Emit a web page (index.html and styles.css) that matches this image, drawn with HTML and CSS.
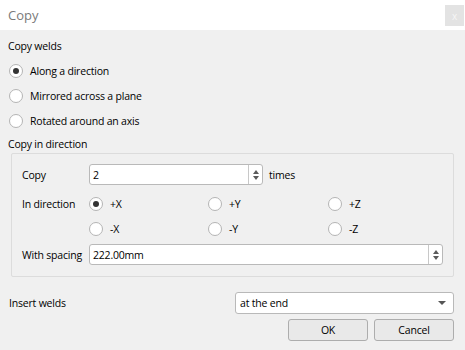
FILE: index.html
```html
<!DOCTYPE html>
<html lang="en">
<head>
    <meta charset="UTF-8">
    <title>Copy</title>
    <link rel="stylesheet" href="styles.css">
</head>
<body>
    <div class="dialog">
        <!-- Title bar -->
        <div class="titlebar">
            <span class="title">Copy</span>
            <span class="close">x</span>
        </div>

        <div class="content">
            <div class="section-label">Copy welds</div>
            <label class="radio-row"><span class="radio checked"></span>Along a direction</label>
            <label class="radio-row"><span class="radio"></span>Mirrored across a plane</label>
            <label class="radio-row"><span class="radio"></span>Rotated around an axis</label>

            <div class="section-label group-title">Copy in direction</div>
            <div class="group">
                <div class="field-row first">
                    <span class="field-label">Copy</span>
                    <div class="spinbox short">
                        <span class="value">2</span>
                        <span class="spin"><i class="up"></i><i class="down"></i></span>
                    </div>
                    <span class="suffix">times</span>
                </div>

                <div class="dir-grid">
                    <span class="field-label">In direction</span>
                    <label class="radio-cell"><span class="radio checked"></span>+X</label>
                    <label class="radio-cell"><span class="radio"></span>+Y</label>
                    <label class="radio-cell"><span class="radio"></span>+Z</label>
                    <span></span>
                    <label class="radio-cell"><span class="radio"></span>-X</label>
                    <label class="radio-cell"><span class="radio"></span>-Y</label>
                    <label class="radio-cell"><span class="radio"></span>-Z</label>
                </div>

                <div class="field-row">
                    <span class="field-label">With spacing</span>
                    <div class="spinbox wide">
                        <span class="value">222.00mm</span>
                        <span class="spin"><i class="up"></i><i class="down"></i></span>
                    </div>
                </div>
            </div>

            <div class="insert-row">
                <span>Insert welds</span>
                <div class="combo">
                    <span>at the end</span>
                    <i class="combo-arrow"></i>
                </div>
            </div>

            <div class="buttons">
                <button>OK</button>
                <button>Cancel</button>
            </div>
        </div>
    </div>
</body>
</html>
```

FILE: styles.css
```css
body {
    margin: 0;
    font-family: "Open Sans", "Noto Sans", sans-serif;
    font-size: 10.5px;
    letter-spacing: -0.2px;
    color: #000;
    background-color: #f0f0f0;
}

.dialog {
    width: 465px;
    height: 350px;
    background-color: #f0f0f0;
    overflow: hidden;
}

.titlebar {
    height: 30px;
    background: white;
    display: flex;
    align-items: center;
    justify-content: space-between;
    padding-left: 8px;
    box-sizing: border-box;
}

.title { color: #7a7a7a; font-size: 13px; letter-spacing: 0; }

.close {
    width: 19px;
    height: 21px;
    margin-right: 1px;
    margin-top: 1px;
    background: #e3e3e3;
    color: #f6f6f6;
    font-size: 10px;
    display: flex;
    align-items: center;
    justify-content: center;
}

.content { padding: 8px 11px 0 8px; }

.section-label { height: 16px; line-height: 16px; }

.radio-row {
    display: flex;
    align-items: center;
    height: 25px;
}

.radio-row:first-of-type { margin-top: 4px; }

.radio {
    width: 12px;
    height: 12px;
    border: 1px solid #b4b4b4;
    border-radius: 50%;
    background: white;
    box-sizing: content-box;
    display: inline-flex;
    align-items: center;
    justify-content: center;
    margin-right: 7px;
    flex-shrink: 0;
}

.radio-row .radio { margin-left: 1px; }

.radio.checked::after {
    content: "";
    width: 6px;
    height: 6px;
    border-radius: 50%;
    background: #333;
}

.group-title { margin-top: 3px; }

.group {
    margin: 1px 0 0 3px;
    border: 1px solid #dcdcdc;
    border-radius: 2px;
    height: 124px;
    box-sizing: border-box;
    padding: 10px 10px 0 10px;
}

.field-row {
    display: flex;
    align-items: center;
    height: 21px;
}

.field-label { width: 67px; flex-shrink: 0; white-space: nowrap; }

.spinbox {
    height: 21px;
    box-sizing: border-box;
    border: 1px solid #b9b9b9;
    border-radius: 3px;
    background: white;
    display: flex;
    align-items: center;
}

.spinbox.short { width: 174px; }
.spinbox.wide { width: 354px; }

.spinbox .value { flex: 1; padding-left: 3px; }

.spin {
    width: 13px;
    height: 100%;
    border-left: 1px solid #c8c8c8;
    display: flex;
    flex-direction: column;
    align-items: center;
    justify-content: center;
    gap: 2px;
}

.spin i {
    width: 0;
    height: 0;
    border-left: 3px solid transparent;
    border-right: 3px solid transparent;
}

.spin .up { border-bottom: 4px solid #5a5a5a; }
.spin .down { border-top: 4px solid #5a5a5a; }

.suffix { margin-left: 6px; }

.dir-grid {
    display: grid;
    grid-template-columns: 67px 119px 120px 1fr;
    grid-auto-rows: 25px;
    align-items: center;
    margin: 6px 0 3px;
}

.radio-cell { display: flex; align-items: center; }

.insert-row {
    display: flex;
    align-items: center;
    justify-content: space-between;
    margin-top: 15px;
    padding-left: 1px;
}

.combo {
    width: 219px;
    height: 22px;
    box-sizing: border-box;
    border: 1px solid #b9b9b9;
    border-radius: 3px;
    background: white;
    display: flex;
    align-items: center;
    justify-content: space-between;
    padding: 0 7px 0 4px;
}

.combo-arrow {
    width: 0;
    height: 0;
    border-left: 4px solid transparent;
    border-right: 4px solid transparent;
    border-top: 4px solid #555;
}

.buttons {
    display: flex;
    justify-content: flex-end;
    gap: 6px;
    margin-top: 5px;
}

button {
    width: 80px;
    height: 22px;
    font-family: inherit;
    font-size: 10.5px;
    letter-spacing: inherit;
    color: #000;
    background: #e9e9e9;
    border: 1px solid #adadad;
    border-radius: 3px;
    padding: 0;
}
```
